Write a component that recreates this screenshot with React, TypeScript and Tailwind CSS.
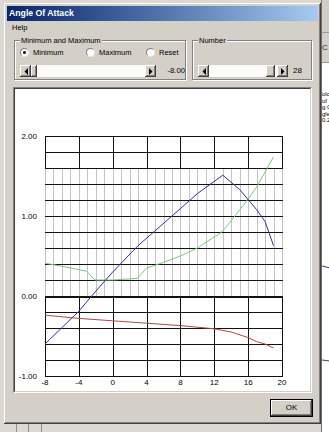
import React from "react";

const X0 = 45;
const X1 = 282;
const px = (x: number) => X0 + ((x + 8) * (X1 - X0)) / 28;
const py = (v: number) => 296 - v * 80;

const blue: [number, number][] = [
  [-8, -0.6], [-4, -0.19], [-2.5, 0], [0, 0.3], [3, 0.63], [7, 1.0], [10, 1.28], [13, 1.51],
  [15, 1.33], [17, 1.08], [18, 0.93], [19, 0.63],
];
const green: [number, number][] = [
  [-8, 0.41], [-5.4, 0.36], [-3.1, 0.31], [-2.1, 0.2], [0, 0.2], [2.9, 0.22], [4, 0.35],
  [6, 0.42], [8, 0.5], [10, 0.6], [12.9, 0.8], [14, 0.94], [15.9, 1.2], [17, 1.36], [19, 1.74],
];
const red: [number, number][] = [
  [-8, -0.24], [-4, -0.28], [0, -0.31], [4, -0.34], [8, -0.37], [12, -0.41], [14, -0.45],
  [16, -0.52], [17, -0.57], [18, -0.6], [19, -0.65],
];

const pts = (d: [number, number][]) => d.map(([x, v]) => `${px(x).toFixed(1)},${py(v).toFixed(1)}`).join(" ");

const raised =
  "shadow-[inset_-1px_-1px_0_#404040,inset_1px_1px_0_#ffffff,inset_-2px_-2px_0_#808080,inset_2px_2px_0_#d4d0c8]";

function Arrow({ dir }: { dir: "l" | "r" }) {
  return (
    <div className={`flex h-[12px] w-[11px] shrink-0 items-center justify-center bg-[#d4d0c8] ${raised}`}>
      <svg width="4" height="7" viewBox="0 0 4 7">
        {dir === "l" ? <polygon points="4,0 4,7 0.5,3.5" fill="#000" /> : <polygon points="0,0 0,7 3.5,3.5" fill="#000" />}
      </svg>
    </div>
  );
}

function ScrollBar({ width, thumb, thumbW }: { width: number; thumb: number; thumbW: number }) {
  return (
    <div className="flex h-[12px]" style={{ width }}>
      <Arrow dir="l" />
      <div className="flex flex-1 bg-[#fbfbfb]">
        <div style={{ width: thumb }} />
        <div className={`h-[12px] bg-[#d4d0c8] ${raised}`} style={{ width: thumbW }} />
      </div>
      <Arrow dir="r" />
    </div>
  );
}

function Radio({ label, checked, w }: { label: string; checked?: boolean; w?: number }) {
  return (
    <div className="flex h-[9px] items-center gap-[4px]" style={{ width: w }}>
      <div className="flex h-[9px] w-[9px] items-center justify-center rounded-full border border-t-[#808080] border-l-[#808080] border-b-[#e8e8e8] border-r-[#e8e8e8] bg-white">
        {checked && <div className="h-[3px] w-[3px] rounded-full bg-black" />}
      </div>
      <span className="text-[7.5px] leading-[9px] text-black">{label}</span>
    </div>
  );
}

function Group({ title, width, children }: { title: string; width: number; children: React.ReactNode }) {
  return (
    <div
      className="relative h-[40px] border border-[#808080] shadow-[inset_1px_1px_0_#ffffff,1px_1px_0_#ffffff]"
      style={{ width }}
    >
      <span className="absolute -top-[5px] left-[5px] bg-[#d4d0c8] px-[1px] text-[7.5px] leading-[9px] text-black">
        {title}
      </span>
      {children}
    </div>
  );
}

function Chart() {
  const hs = Array.from({ length: 16 }, (_, i) => 136 + i * 16);
  const majors = Array.from({ length: 8 }, (_, i) => Math.round(px(-8 + i * 4)));
  const minors = Array.from({ length: 29 }, (_, i) => Math.round(px(-8 + i)));
  const xl = ["-8", "-4", "0", "4", "8", "12", "16", "20"];
  return (
    <svg width="295" height="302" viewBox="15 89 295 302" className="block">
      <rect x="15" y="89" width="295" height="302" fill="#fff" />
      <g shapeRendering="crispEdges">
        {minors.map((x, i) => (
          <line key={"m" + i} x1={x + 0.5} x2={x + 0.5} y1={168} y2={296} stroke="#c4c4c4" />
        ))}
        {majors.map((x, i) => (
          <g key={"M" + i}>
            <line x1={x + 0.5} x2={x + 0.5} y1={136} y2={168} stroke="#111" />
            <line x1={x + 0.5} x2={x + 0.5} y1={296} y2={377} stroke="#111" />
          </g>
        ))}
        {hs.map((y) => (
          <line
            key={y}
            x1={45}
            x2={283}
            y1={y === 296 ? y + 1 : y + 0.5}
            y2={y === 296 ? y + 1 : y + 0.5}
            stroke="#111"
            strokeWidth={y === 296 ? 2 : 1}
          />
        ))}
      </g>
      <polyline points={pts(red)} fill="none" stroke="#b04848" strokeWidth="1" />
      <polyline points={pts(green)} fill="none" stroke="#78cc78" strokeWidth="1" />
      <polyline points={pts(blue)} fill="none" stroke="#34348f" strokeWidth="1" />
      <g fontFamily="'Liberation Sans', Arial, sans-serif" fontSize="8" fill="#000">
        {[
          ["2.00", 136],
          ["1.00", 216],
          ["0.00", 296],
          ["-1.00", 376],
        ].map(([t, y]) => (
          <text key={t as string} x={37} y={(y as number) + 3} textAnchor="end">
            {t}
          </text>
        ))}
        {xl.map((t, i) => (
          <text key={t} x={px(-8 + i * 4)} y={385} textAnchor="middle">
            {t}
          </text>
        ))}
      </g>
    </svg>
  );
}

export default function App() {
  return (
    <div className="flex h-[432px] w-[329px] overflow-hidden bg-[#dcd9d3] font-['Liberation_Sans',Arial,sans-serif]">
      <div className="flex w-[321px] shrink-0 flex-col pl-[4px] pt-[3px]">
        <div
          className={`flex h-[421px] w-[317px] shrink-0 flex-col bg-[#d4d0c8] p-[3px] ${raised}`}
        >
          <div className="flex h-[15px] items-center bg-linear-to-r from-[#0a246a] to-[#a6caf0] pl-[2px]">
            <span className="text-[8.7px] font-bold leading-none text-white">Angle Of Attack</span>
          </div>
          <div className="flex h-[13px] items-center pl-[5px]">
            <span className="text-[7.5px] leading-none text-black">Help</span>
          </div>
          <div className="mt-[6px] flex gap-[6px] pl-[7px]">
            <Group title="Minimum and Maximum" width={172}>
              <div className="mt-[7px] flex pl-[5px]">
                <Radio label="Minimum" checked w={66} />
                <Radio label="Maximum" w={60} />
                <Radio label="Reset" />
              </div>
              <div className="mt-[8px] flex items-center pl-[5px]">
                <ScrollBar width={137} thumb={0} thumbW={6} />
                <span className="ml-[11px] text-[7.7px] leading-none text-black">-8.00</span>
              </div>
            </Group>
            <Group title="Number" width={120}>
              <div className="mt-[24px] flex items-center pl-[5px]">
                <ScrollBar width={90} thumb={57} thumbW={9} />
                <span className="ml-[5px] text-[8px] leading-none text-black">28</span>
              </div>
            </Group>
          </div>
          <div className="ml-[6px] mt-[7px] h-[306px] w-[299px] border border-t-[#808080] border-l-[#808080] border-b-white border-r-white">
            <div className="h-[304px] w-[297px] border border-t-[#404040] border-l-[#404040] border-b-[#d4d0c8] border-r-[#d4d0c8]">
              <Chart />
            </div>
          </div>
          <div className="ml-[263px] mt-[6px] h-[18px] w-[43px] border border-black">
            <div className={`flex h-full w-full items-center justify-center bg-[#d4d0c8] ${raised}`}>
              <span className="text-[8px] leading-none text-black">OK</span>
            </div>
          </div>
        </div>
        <div className="flex h-[8px] shrink-0 pl-[12px]">
          <div className="h-full w-[12px] border-l border-[#909090]" />
          <div className="h-full w-[13px] border-l border-[#909090]" />
          <div className="h-full w-[12px] border-l border-[#909090]" />
        </div>
      </div>
      <div className="flex h-[432px] w-[8px] shrink-0 flex-col overflow-hidden border-l border-[#707070]">
        <div className="h-[33px] shrink-0 border-b border-[#9a9a9a] bg-[#d0cdc6]" />
        <div className="flex h-[30px] shrink-0 items-center border-b border-[#9a9a9a] bg-[#d4d0c8]">
          <span className="text-[8px] leading-none text-[#333]">C</span>
        </div>
        <div className="flex min-h-0 flex-1 flex-col overflow-hidden bg-white pt-[28px]">
          <div className="flex shrink-0 flex-col whitespace-nowrap text-[6px] leading-[6.5px] text-black">
            <span>olc</span>
            <span>of</span>
            <span>g C</span>
            <span>gle</span>
            <span>0.2</span>
          </div>
          <svg width="8" height="100" className="mt-[140px] shrink-0">
            <line x1="0" y1="2" x2="8" y2="4" stroke="#3a3a8a" />
            <line x1="0" y1="96" x2="8" y2="97" stroke="#444" />
          </svg>
        </div>
      </div>
    </div>
  );
}
